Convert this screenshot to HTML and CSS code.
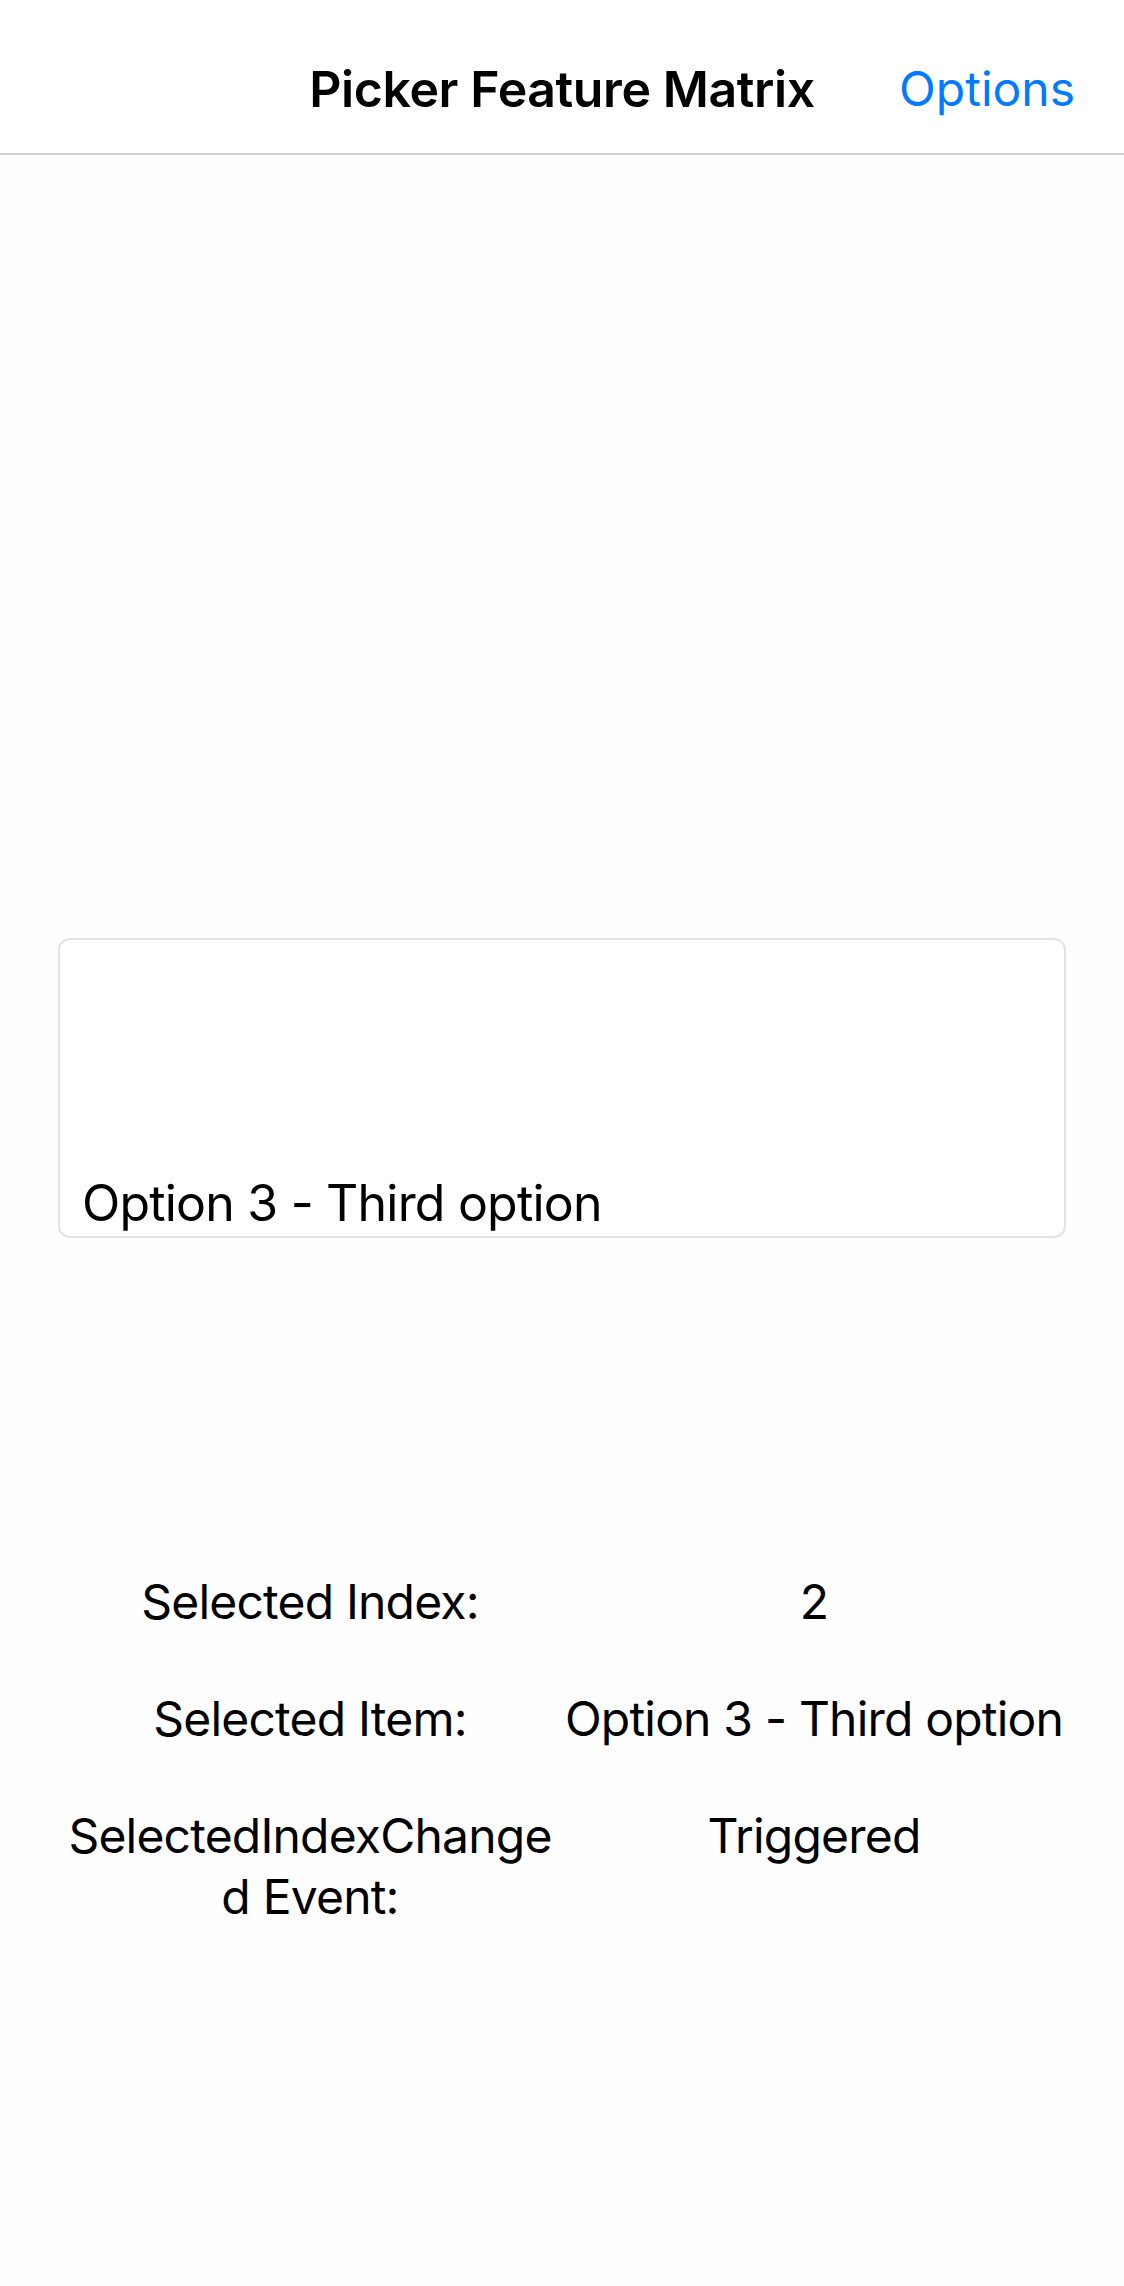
FILE: index.html
```html
<!DOCTYPE html>
<html lang="en">
<head>
<meta charset="utf-8">
<title>Picker Feature Matrix</title>
<link rel="stylesheet" href="styles.css">
</head>
<body>
<header class="navbar">
  <div class="nav-side"></div>
  <h1 class="nav-title">Picker Feature Matrix</h1>
  <div class="nav-side nav-right"><a class="nav-action">Options</a></div>
</header>
<main class="content">
  <div class="picker">
    <span class="picker-text">Option 3 - Third option</span>
  </div>
  <div class="matrix">
    <div class="cell label">Selected Index:</div>
    <div class="cell value">2</div>
    <div class="cell label">Selected Item:</div>
    <div class="cell value">Option 3 - Third option</div>
    <div class="cell label">SelectedIndexChanged Event:</div>
    <div class="cell value">Triggered</div>
  </div>
</main>
</body>
</html>
```
FILE: styles.css
```css
html, body {
  margin: 0;
  padding: 0;
  background: #fefefe;
}
body {
  font-family: Inter, "Noto Sans", "Liberation Sans", sans-serif;
  color: #000;
  width: 1124px;
  height: 2286px;
}
.navbar {
  box-sizing: border-box;
  height: 155px;
  padding: 24px 49px 0 49px;
  display: grid;
  grid-template-columns: 1fr auto 1fr;
  align-items: center;
  border-bottom: 2px solid #d0d0d2;
  background: #fff;
}
.nav-title {
  margin: 0;
  font-size: 50px;
  font-weight: 600;
  letter-spacing: -0.4px;
}
.nav-right {
  justify-self: end;
}
.nav-action {
  font-size: 48px;
  color: #007aff;
}
.content {
  padding: 0 58px;
}
.picker {
  box-sizing: border-box;
  margin-top: 783px;
  height: 300px;
  border: 2px solid #e3e3e5;
  border-radius: 12px;
  background: #fff;
  display: flex;
  align-items: flex-end;
  padding: 0 22px 2px 22px;
}
.picker-text {
  font-size: 50px;
  line-height: 61px;
  letter-spacing: -0.8px;
}
.matrix {
  margin-top: 333px;
  display: grid;
  grid-template-columns: 1fr 1fr;
  row-gap: 56px;
}
.cell {
  font-size: 48px;
  line-height: 61px;
  letter-spacing: -0.8px;
  text-align: center;
  word-break: break-all;
}
```
